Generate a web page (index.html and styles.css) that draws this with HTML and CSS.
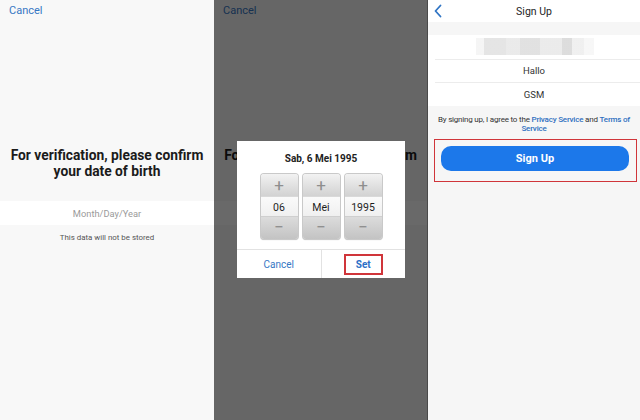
FILE: index.html
```html
<!DOCTYPE html>
<html>
<head>
<meta charset="utf-8">
<link rel="stylesheet" href="styles.css">
</head>
<body>
<div class="screens">
  <section class="panel verify">
    <div class="topbar"><span class="link">Cancel</span></div>
    <h1 class="title">For verification, please confirm<br>your date of birth</h1>
    <div class="field">Month/Day/Year</div>
    <p class="note">This data will not be stored</p>
  </section>

  <section class="panel verify dimmed">
    <div class="topbar"><span class="link">Cancel</span></div>
    <h1 class="title">For verification, please confirm<br>your date of birth</h1>
    <div class="field">Month/Day/Year</div>
    <p class="note">This data will not be stored</p>
    <div class="overlay">
      <div class="dialog">
        <div class="dlg-title">Sab, 6 Mei 1995</div>
        <div class="pickers">
          <div class="picker"><div class="pk-btn">+</div><div class="pk-val">06</div><div class="pk-btn minus">−</div></div>
          <div class="picker"><div class="pk-btn">+</div><div class="pk-val">Mei</div><div class="pk-btn minus">−</div></div>
          <div class="picker"><div class="pk-btn">+</div><div class="pk-val">1995</div><div class="pk-btn minus">−</div></div>
        </div>
        <div class="dlg-actions">
          <div class="dlg-btn">Cancel</div>
          <div class="dlg-btn"><span class="hl">Set</span></div>
        </div>
      </div>
    </div>
  </section>

  <section class="panel signup">
    <header class="su-head">
      <svg class="back" width="10" height="14" viewBox="0 0 10 14"><path d="M7.5 1.5 L2.5 7 L7.5 12.5" fill="none" stroke="#2f74c4" stroke-width="1.8" stroke-linecap="round" stroke-linejoin="round"/></svg>
      <span class="su-title">Sign Up</span>
    </header>
    <div class="rows">
      <div class="row"><div class="blur"></div></div>
      <div class="row">Hallo</div>
      <div class="row">GSM</div>
    </div>
    <p class="terms">By signing up, I agree to the <span class="lnk">Privacy Service</span> and <span class="lnk">Terms of Service</span></p>
    <div class="btn-frame"><div class="primary">Sign Up</div></div>
  </section>
</div>
</body>
</html>
```
FILE: styles.css
```css
* { box-sizing: border-box; }
html, body { margin: 0; padding: 0; }
body {
  width: 640px; height: 420px; overflow: hidden;
  font-family: Roboto, "Noto Sans", Arial, sans-serif;
  background: #f8f8f8;
}
.screens { display: flex; height: 420px; }
.panel { height: 420px; position: relative; background: #f8f8f8; }
.verify { width: 214px; }
.signup { width: 212px; background: #f6f6f6; }

.topbar { height: 22px; padding: 4px 0 0 9px; font-size: 11px; line-height: 13px; }
.link { color: #3677c4; }

.title {
  margin: 125px 0 0; text-align: center;
  font-size: 13.8px; line-height: 16px; font-weight: 700; color: #1b1b1b;
}
.field {
  margin-top: 22px; height: 24px; background: #fff;
  text-align: center; line-height: 25px; font-size: 9.3px; color: #9a9a9a;
}
.note { margin: 8px 0 0; text-align: center; font-size: 7.9px; line-height: 10px; color: #555; }

.dimmed { border-right: 1px solid #4a4a4a; }
.overlay {
  position: absolute; inset: 0;
  background: rgba(0,0,0,0.59);
}
.dialog {
  position: absolute; left: 23px; top: 141px; width: 168px; height: 137px;
  background: #fff;
}
.dlg-title { text-align: center; font-size: 10px; font-weight: 700; color: #222; padding-top: 12px; line-height: 12px; }
.pickers { display: flex; justify-content: center; gap: 5px; margin-top: 9px; }
.picker {
  width: 37px; height: 65px; border-radius: 3px; overflow: hidden;
  display: flex; flex-direction: column;
  box-shadow: 0 0 0 1px #c9c9c9, 0 1px 1px rgba(0,0,0,0.25);
}
.pk-btn {
  height: 22px; text-align: center; font-size: 17px; line-height: 22px; color: #8e8e8e;
  background: linear-gradient(#f2f2f2, #d2d2d2);
}
.pk-btn.minus { background: linear-gradient(#dcdcdc, #c3c3c3); line-height: 20px; }
.pk-val {
  height: 21px; text-align: center; font-size: 10.5px; line-height: 21px; color: #1e1e1e;
  background: linear-gradient(#fafafa, #f0f0f0);
  border-top: 1px solid #d9d9d9; border-bottom: 1px solid #cfcfcf;
}
.dlg-actions {
  position: absolute; left: 0; right: 0; bottom: 0; height: 29px;
  display: flex; border-top: 1px solid #e2e2e2;
}
.dlg-btn {
  flex: 1; display: flex; align-items: center; justify-content: center;
  font-size: 10px; color: #3677c4;
}
.dlg-btn + .dlg-btn { border-left: 1px solid #e2e2e2; }
.hl {
  font-weight: 700; border: 2px solid #d0353a; width: 39px; height: 21px;
  display: flex; align-items: center; justify-content: center; color: #2b6fc6;
}

.su-head {
  height: 22px; background: #fff; display: flex; align-items: center; justify-content: center;
  position: relative;
}
.back { position: absolute; left: 5px; top: 4px; }
.su-title { font-size: 10.5px; color: #1e1e1e; }
.rows { margin-top: 13px; background: #fff; }
.row {
  height: 23.5px; display: flex; align-items: center; justify-content: center;
  font-size: 9.5px; color: #333;
  border-top: 1px solid #ececec; margin-left: 7px; padding-right: 7px;
}
.row:first-child { border-top: none; }
.blur {
  width: 118px; height: 17px; margin-left: 2px;
  background:
    linear-gradient(90deg, #f4f4f4 0 8px, #e2e2e2 8px 30px, #e8e8e8 30px 44px, #dedede 44px 64px, #e9e9e9 64px 86px, #d9d9d9 86px 96px, #eeeeee 96px 108px, #f6f6f6 108px);
  opacity: 0.9;
}
.terms {
  margin: 9px 2px 0; text-align: center; font-size: 8px; line-height: 9px; color: #333;
  letter-spacing: -0.2px;
}
.lnk { color: #2e6fc0; font-weight: 500; }
.btn-frame {
  margin: 6px 3px 0 6px; border: 1.5px solid #d0353a; padding: 6px 7px 8px 6px; height: 43px;
}
.primary {
  height: 25px; border-radius: 10px; background: #1c78ea; color: #fff;
  font-weight: 700; font-size: 11px; display: flex; align-items: center; justify-content: center;
}
```
